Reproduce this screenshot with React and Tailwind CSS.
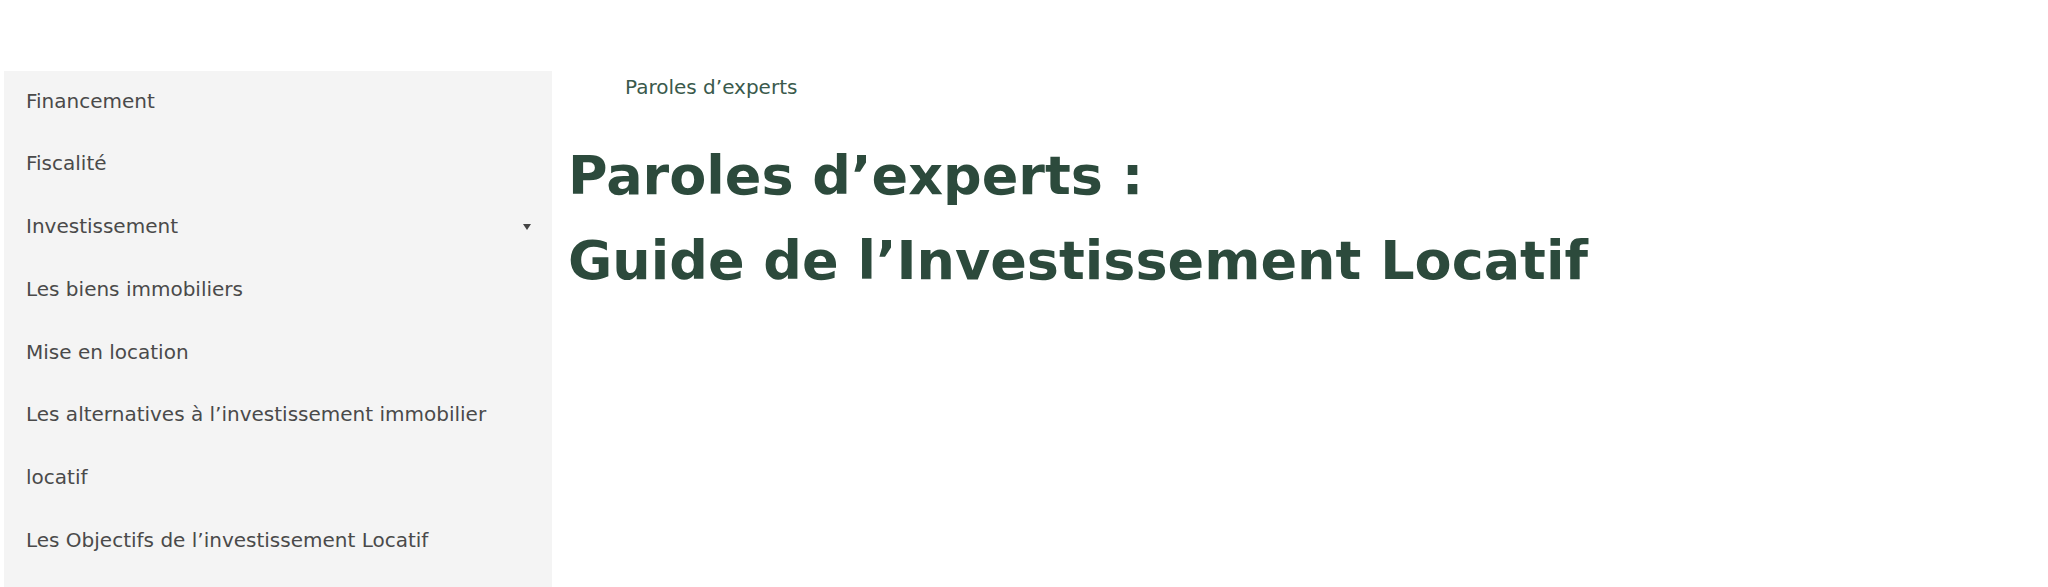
import React from "react";

const items = [
  "Financement",
  "Fiscalité",
  "Investissement",
  "Les biens immobiliers",
  "Mise en location",
  "Les alternatives à l’investissement immobilier",
  "locatif",
  "Les Objectifs de l’investissement Locatif",
];

export default function App() {
  return (
    <div className="min-h-[587px] bg-white font-['DejaVu_Sans',sans-serif] overflow-hidden">
      <div className="h-[70.7px]" />
      <div className="flex items-start">
        <nav className="ml-[4px] w-[548px] shrink-0 bg-[#f4f4f4] pb-[40px]">
          <ul>
            {items.map((t) => (
              <li
                key={t}
                className="flex items-center justify-between pl-[22px] pr-[21px] pt-[15px] pb-[17px] text-[20px] leading-[30.7px] text-[#4a4a4a]"
              >
                <span>{t}</span>
                {t === "Investissement" && (
                  <svg width="8" height="6" viewBox="0 0 8 6" className="mt-[2px]">
                    <path d="M0 0 H8 L4 6 Z" fill="#444" />
                  </svg>
                )}
              </li>
            ))}
          </ul>
        </nav>
        <main className="pl-[16px] pt-[1px]">
          <div className="pl-[57px] text-[20px] leading-[30px] text-[#3a5a4c]">
            Paroles d’experts
          </div>
          <h1 className="mt-[31px] text-[54px] leading-[85px] font-bold text-[#2c4a3c]">
            Paroles d’experts :
            <br />
            Guide de l’Investissement Locatif
          </h1>
        </main>
      </div>
    </div>
  );
}
